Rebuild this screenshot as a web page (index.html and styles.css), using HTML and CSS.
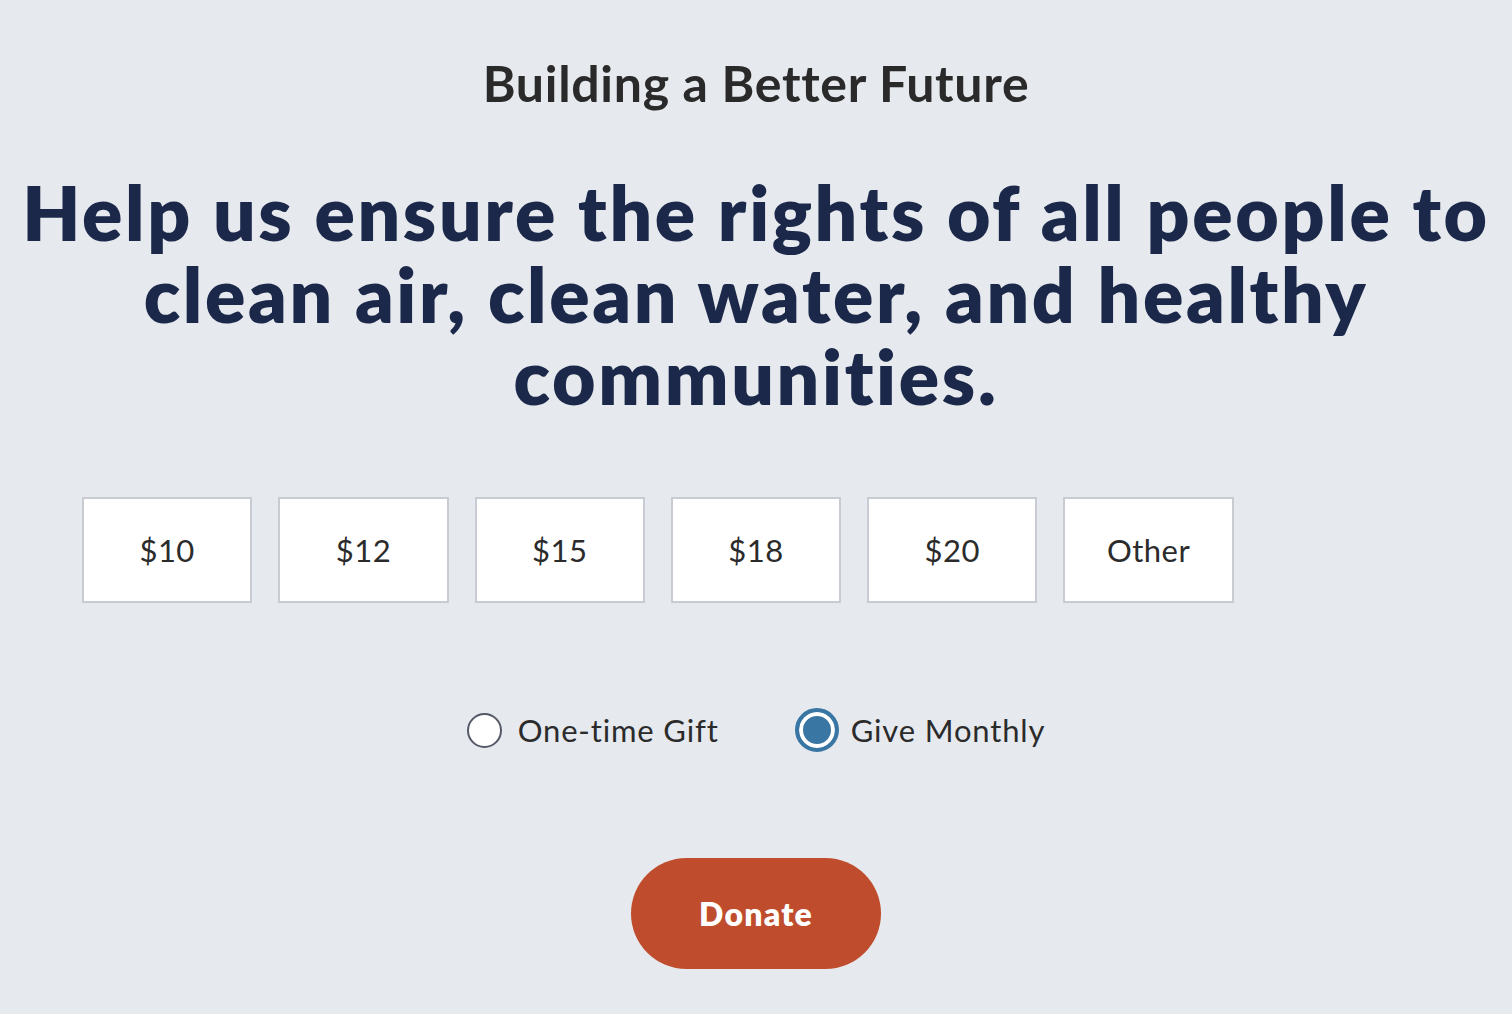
FILE: index.html
```html
<!DOCTYPE html>
<html lang="en">
<head>
<meta charset="utf-8">
<title>Building a Better Future</title>
<link rel="stylesheet" href="styles.css">
</head>
<body>
<main class="page">
  <h2 class="subtitle">Building a Better Future</h2>
  <h1 class="headline">Help us ensure the rights of all people to clean air, clean water, and healthy communities.</h1>
  <div class="amounts">
    <button class="amount">$10</button>
    <button class="amount">$12</button>
    <button class="amount">$15</button>
    <button class="amount">$18</button>
    <button class="amount">$20</button>
    <button class="amount">Other</button>
  </div>
  <div class="freq">
    <label class="option"><span class="radio"></span><span class="opt-label">One-time Gift</span></label>
    <label class="option"><span class="radio radio-on"></span><span class="opt-label">Give Monthly</span></label>
  </div>
  <div class="cta">
    <button class="donate">Donate</button>
  </div>
</main>
</body>
</html>
```
FILE: styles.css
```css
* { box-sizing: border-box; }
html, body { margin: 0; padding: 0; }
body {
  background: #e6e9ee;
  font-family: "Lato", "Open Sans", sans-serif;
  font-variant-ligatures: none;
  width: 1512px;
  height: 1014px;
  overflow: hidden;
}
.page {
  display: flex;
  flex-direction: column;
  align-items: stretch;
  padding-top: 53px;
}
.subtitle {
  margin: 0;
  text-align: center;
  font-size: 50px;
  line-height: 60px;
  font-weight: 700;
  letter-spacing: 0.7px;
  color: #2a2a2a;
}
.headline {
  margin: 58px 0 0;
  text-align: center;
  font-size: 75px;
  line-height: 82px;
  font-weight: 800;
  letter-spacing: 2.65px;
  color: #1b2849;
  padding: 0 6px;
}
.amounts {
  margin-top: 80px;
  padding: 0 82px;
  display: grid;
  grid-template-columns: repeat(7, 1fr);
  gap: 26px;
}
.amount {
  height: 106px;
  background: #fff;
  border: 2px solid #c8cbd2;
  font-family: inherit;
  font-size: 31px;
  letter-spacing: 0.5px;
  color: #2b2b2b;
  padding: 0;
}
.freq {
  margin-top: 105px;
  display: flex;
  justify-content: center;
  gap: 76px;
  height: 44px;
  align-items: center;
}
.option {
  display: flex;
  align-items: center;
  gap: 16px;
}
.radio {
  width: 35px;
  height: 35px;
  border-radius: 50%;
  background: #fff;
  border: 2px solid #555866;
  flex: none;
}
.radio-on {
  width: 44px;
  height: 44px;
  border: 4px solid #3a76a3;
  background: #3a76a3;
  box-shadow: inset 0 0 0 4px #fff;
  margin-right: -4px;
}
.opt-label {
  font-size: 31px;
  letter-spacing: 0.85px;
  color: #2b2b2b;
}
.cta {
  margin-top: 106px;
  display: flex;
  justify-content: center;
}
.donate {
  width: 250px;
  height: 111px;
  border: none;
  border-radius: 56px;
  background: #bf4d2d;
  color: #fff;
  font-family: inherit;
  font-size: 32px;
  font-weight: 800;
  letter-spacing: 1.2px;
}
```
